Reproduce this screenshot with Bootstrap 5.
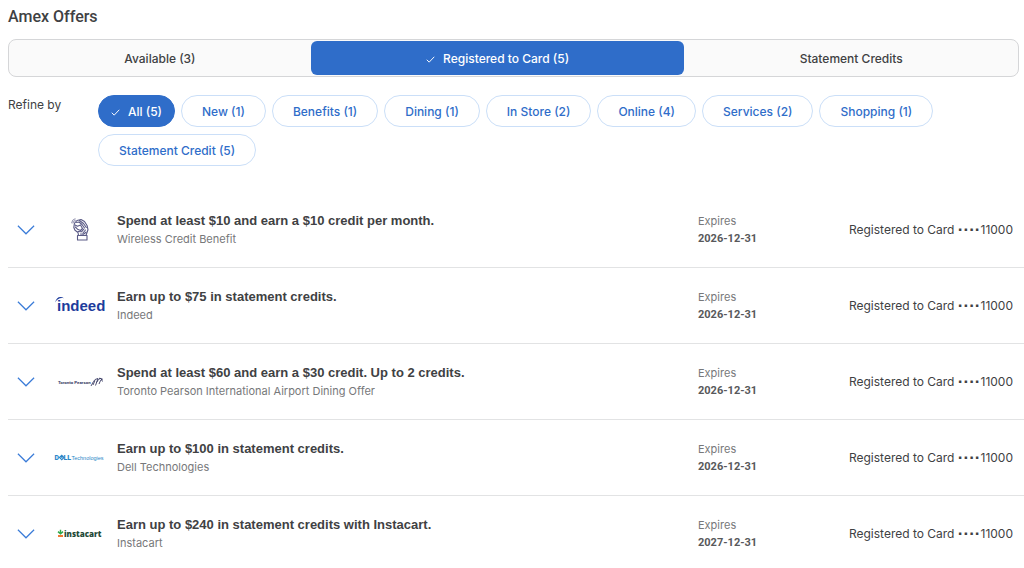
<!doctype html>
<html lang="en">
<head>
<meta charset="utf-8">
<meta name="viewport" content="width=device-width, initial-scale=1">
<title>Amex Offers</title>
<link href="https://cdn.jsdelivr.net/npm/bootstrap@5.3.0/dist/css/bootstrap.min.css" rel="stylesheet">
<style>
  :root { --blue: #2f6dc9; --ink: #404143; --muted: #77787a; }
  body { font: 12px/18px Inter, "Liberation Sans", sans-serif; color: var(--ink); background: #fff; }
  .page { padding: 7px 0 0 8px; }
  .page-title { font: 500 16px/20px Roboto, sans-serif; margin: 0 0 12px; }

  .segments { margin-right: 5px; padding: 1px 0; background: #fafafa; border: 1px solid #d5d6d8; border-radius: 8px; }
  .segments button { height: 34px; border: 0; padding: 1px 0 0; background: none; color: inherit; font-weight: 500; border-radius: 6px; }
  .segments button.active { background: var(--blue); color: #fff; }
  .tick { width: 9px; height: 7px; fill: none; stroke: currentColor; stroke-width: 1.1; }

  .refine { padding-top: 18px; }
  .refine-label { width: 90px; padding-top: 1px; }
  .chips { gap: 7px 6px; }
  .chips button { height: 32px; padding: 1px 20px 0; border: 1px solid #cbdff8; background: #fff; color: var(--blue); font-weight: 500; white-space: nowrap; }
  .chips button.active { padding: 1px 12px 0; background: var(--blue); border-color: var(--blue); color: #fff; }

  .offers { padding-top: 26px; }
  .offer { padding: 20px 0 19px; border-bottom: 1px solid #e2e3e4; }
  .offer:last-child { padding-bottom: 0; border: 0; }
  .toggle { width: 36px; border: 0; padding: 0; background: none; color: #3b7cd8; }
  .toggle svg { display: block; margin: 0 auto; width: 18px; height: 10px; fill: none; stroke: currentColor; stroke-width: 1.2; }
  .brand { width: 52px; margin: 0 11px 0 10px; }
  .offer-title { font: bold 13px/18px "Liberation Sans", sans-serif; margin: 0; }
  .offer-sub { font-size: 11px; color: var(--muted); margin: 0; }
  .expires { width: 151px; }
  .expires strong { display: block; font: bold 11px/18px Roboto, sans-serif; color: #58595b; }
  .expires span { display: block; font-size: 11px; color: var(--muted); }
  .status { width: 175px; padding-right: 11px; white-space: nowrap; }
  .dots { font: bold 17px/18px "Liberation Sans", sans-serif; }
</style>
</head>
<body>
<main class="page">
  <h1 class="page-title">Amex Offers</h1>

  <div class="segments d-flex">
    <button type="button" class="flex-fill">Available (3)</button>
    <button type="button" class="flex-fill active" aria-pressed="true"><svg class="tick me-2" viewBox="0 0 10 8" aria-hidden="true"><path d="M.7 4.3 3.5 7 9.3.9"/></svg>Registered to Card (5)</button>
    <button type="button" class="flex-fill">Statement Credits</button>
  </div>

  <div class="refine d-flex">
    <div class="refine-label flex-shrink-0">Refine by</div>
    <div class="chips d-flex flex-wrap">
      <button type="button" class="rounded-pill active" aria-pressed="true"><svg class="tick me-2" viewBox="0 0 10 8" aria-hidden="true"><path d="M.7 4.3 3.5 7 9.3.9"/></svg>All (5)</button>
      <button type="button" class="rounded-pill">New (1)</button>
      <button type="button" class="rounded-pill">Benefits (1)</button>
      <button type="button" class="rounded-pill">Dining (1)</button>
      <button type="button" class="rounded-pill">In Store (2)</button>
      <button type="button" class="rounded-pill">Online (4)</button>
      <button type="button" class="rounded-pill">Services (2)</button>
      <button type="button" class="rounded-pill">Shopping (1)</button>
      <button type="button" class="rounded-pill">Statement Credit (5)</button>
    </div>
  </div>

  <ul class="offers list-unstyled mb-0">
    <li class="offer d-flex align-items-center">
      <button type="button" class="toggle" aria-label="Show details"><svg viewBox="0 0 18 10"><path d="M.9.8 9 8.8 17.1.8"/></svg></button>
      <div class="brand d-flex justify-content-center">
        <svg width="18" height="24" viewBox="0 0 18 24" fill="none" stroke="#5a5a86" stroke-width="1.1" stroke-linejoin="round" stroke-linecap="round">
          <path d="M6.500 17.500H16V22H6.500zM7.500 17.300 7 14.500 4 12.300 2.800 9.500l.6-4.200L6 2.500l4-1 3.500 2 2.700 4.300.8 4-2 5.500"/>
          <path d="M5.500 4.500 8 4l3 2.500 2.500 3.500M4 7l2.500 1.300L9.500 7l2 3.500-2 2-3-1.300L4.300 9M7 13.500l3.500.3 2.300-2.600M8.500 2.500l4 3 2.800 4M12 15l2.500-3M9.500 16l3 .2 2.500-2"/>
          <path d="M.6 4.800Q1 1.500 4 .7M1.900 5Q2.300 2.800 4.500 2.100" stroke-width=".7"/>
        </svg>
      </div>
      <div class="flex-grow-1">
        <h2 class="offer-title">Spend at least $10 and earn a $10 credit per month.</h2>
        <p class="offer-sub">Wireless Credit Benefit</p>
      </div>
      <div class="expires"><span>Expires</span><strong>2026-12-31</strong></div>
      <div class="status d-flex justify-content-end">Registered to Card&nbsp;<span class="dots">····</span>11000</div>
    </li>
    <li class="offer d-flex align-items-center">
      <button type="button" class="toggle" aria-label="Show details"><svg viewBox="0 0 18 10"><path d="M.9.8 9 8.8 17.1.8"/></svg></button>
      <div class="brand d-flex justify-content-center">
        <svg width="52" height="20" viewBox="0 0 52 20">
          <path d="M1.200 6.500C2 1.500 6 -.5 10 2.200 6.500 1.200 3 2.500 1.200 6.500Z" fill="#1d3c9c"/>
          <text x="3" y="15" font-family="Liberation Sans, sans-serif" font-weight="bold" font-size="15" fill="#1d3c9c">indeed</text>
        </svg>
      </div>
      <div class="flex-grow-1">
        <h2 class="offer-title">Earn up to $75 in statement credits.</h2>
        <p class="offer-sub">Indeed</p>
      </div>
      <div class="expires"><span>Expires</span><strong>2026-12-31</strong></div>
      <div class="status d-flex justify-content-end">Registered to Card&nbsp;<span class="dots">····</span>11000</div>
    </li>
    <li class="offer d-flex align-items-center">
      <button type="button" class="toggle" aria-label="Show details"><svg viewBox="0 0 18 10"><path d="M.9.8 9 8.8 17.1.8"/></svg></button>
      <div class="brand d-flex justify-content-center">
        <svg width="52" height="12" viewBox="0 0 52 12">
          <text x="4" y="8" font-family="Roboto, sans-serif" font-weight="700" font-size="4.400" fill="#3a3c64">Toronto Pearson</text>
          <path d="M37 10 39.500 5.500Q40.500 3 44 2.500L41.500 9.500M42.500 6.500 44.500 3.500Q46 1.500 48.500 3.200L46.700 4.200 45 8M45 2.200Q47.500 1.500 48.500 5.500M39 9 41 4.500" fill="none" stroke="#3a3c64" stroke-width=".9"/>
        </svg>
      </div>
      <div class="flex-grow-1">
        <h2 class="offer-title">Spend at least $60 and earn a $30 credit. Up to 2 credits.</h2>
        <p class="offer-sub">Toronto Pearson International Airport Dining Offer</p>
      </div>
      <div class="expires"><span>Expires</span><strong>2026-12-31</strong></div>
      <div class="status d-flex justify-content-end">Registered to Card&nbsp;<span class="dots">····</span>11000</div>
    </li>
    <li class="offer d-flex align-items-center">
      <button type="button" class="toggle" aria-label="Show details"><svg viewBox="0 0 18 10"><path d="M.9.8 9 8.8 17.1.8"/></svg></button>
      <div class="brand d-flex justify-content-center">
        <svg width="52" height="12" viewBox="0 0 104 24" fill="#2b87c8">
          <text x="1" y="16" font-family="Roboto, sans-serif" font-weight="900" font-size="14">D</text>
          <path d="M11 11 15.500 6.500 20 11 15.500 15.500Z" fill="none" stroke="#2b87c8" stroke-width="2.200"/>
          <path d="M13.500 11h4" stroke="#2b87c8" stroke-width="1.600"/>
          <text x="19" y="16" font-family="Roboto, sans-serif" font-weight="900" font-size="14">LL</text>
          <text x="35" y="16" font-family="Liberation Sans, sans-serif" font-size="11">Technologies</text>
        </svg>
      </div>
      <div class="flex-grow-1">
        <h2 class="offer-title">Earn up to $100 in statement credits.</h2>
        <p class="offer-sub">Dell Technologies</p>
      </div>
      <div class="expires"><span>Expires</span><strong>2026-12-31</strong></div>
      <div class="status d-flex justify-content-end">Registered to Card&nbsp;<span class="dots">····</span>11000</div>
    </li>
    <li class="offer d-flex align-items-center">
      <button type="button" class="toggle" aria-label="Show details"><svg viewBox="0 0 18 10"><path d="M.9.8 9 8.8 17.1.8"/></svg></button>
      <div class="brand d-flex justify-content-center">
        <svg width="52" height="12" viewBox="0 0 52 12">
          <path d="M4 7h5v2H4z" fill="#f07a35"/>
          <path d="M6.500 1.800v4.400M4 3.600 6.500 5.800 9 3.600" stroke="#2da84a" stroke-width="1.400" fill="none"/>
          <text x="10" y="9" font-family="Open Sans, sans-serif" font-weight="800" font-size="8" fill="#1f4a37">instacart</text>
        </svg>
      </div>
      <div class="flex-grow-1">
        <h2 class="offer-title">Earn up to $240 in statement credits with Instacart.</h2>
        <p class="offer-sub">Instacart</p>
      </div>
      <div class="expires"><span>Expires</span><strong>2027-12-31</strong></div>
      <div class="status d-flex justify-content-end">Registered to Card&nbsp;<span class="dots">····</span>11000</div>
    </li>
  </ul>
</main>
<script src="https://cdn.jsdelivr.net/npm/bootstrap@5.3.0/dist/js/bootstrap.bundle.min.js"></script>
</body>
</html>
